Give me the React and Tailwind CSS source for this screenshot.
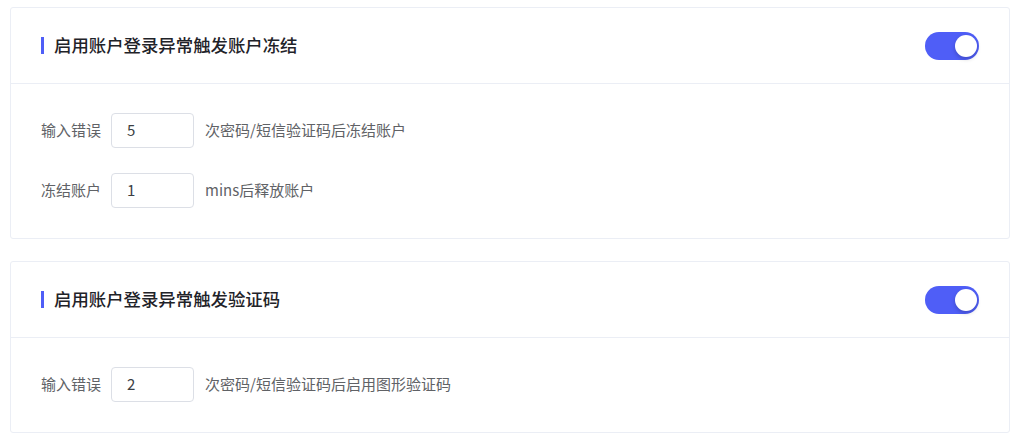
import React from "react";

const font = { fontFamily: '"Noto Sans CJK SC", "Noto Sans", sans-serif' };

function Toggle() {
  return (
    <div className="relative w-[54px] h-[28px] rounded-full bg-[#4f5ef7]">
      <div className="absolute right-[2px] top-[3px] w-[22px] h-[22px] rounded-full bg-white shadow-[0_2px_4px_rgba(0,0,0,0.2)]" />
    </div>
  );
}

function Row({ label, value, suffix }) {
  return (
    <div className="flex items-center h-[35px]">
      <span className="text-[15px] text-[#606266] w-[70px]">{label}</span>
      <div className="w-[83px] h-[35px] border border-[#dcdfe6] rounded-[4px] flex items-center pl-[15px] text-[15px] text-[#3c3f44]">
        {value}
      </div>
      <span className="ml-[11px] text-[15px] text-[#606266]">{suffix}</span>
    </div>
  );
}

function Card({ title, children }) {
  return (
    <div className="border border-[#ebeef5] rounded-[3px] bg-white">
      <div className="h-[76px] flex items-center justify-between pl-[30px] pr-[30px] border-b border-[#ebeef5]">
        <div className="flex items-center">
          <div className="w-[3px] h-[17px] bg-[#4f5ef7]" />
          <span className="ml-[10px] text-[17.4px] font-medium text-[#1f2329]">{title}</span>
        </div>
        <Toggle />
      </div>
      <div className="pl-[30px] pt-[29px] pb-[30px] flex flex-col gap-[25px]">{children}</div>
    </div>
  );
}

export default function App() {
  return (
    <div className="w-[1020px] h-[440px] bg-white pt-[7px] pl-[10px] pr-[10px]" style={font}>
      <div className="flex flex-col gap-[22px]">
        <Card title="启用账户登录异常触发账户冻结">
          <Row label="输入错误" value="5" suffix="次密码/短信验证码后冻结账户" />
          <Row label="冻结账户" value="1" suffix="mins后释放账户" />
        </Card>
        <Card title="启用账户登录异常触发验证码">
          <Row label="输入错误" value="2" suffix="次密码/短信验证码后启用图形验证码" />
        </Card>
      </div>
    </div>
  );
}
